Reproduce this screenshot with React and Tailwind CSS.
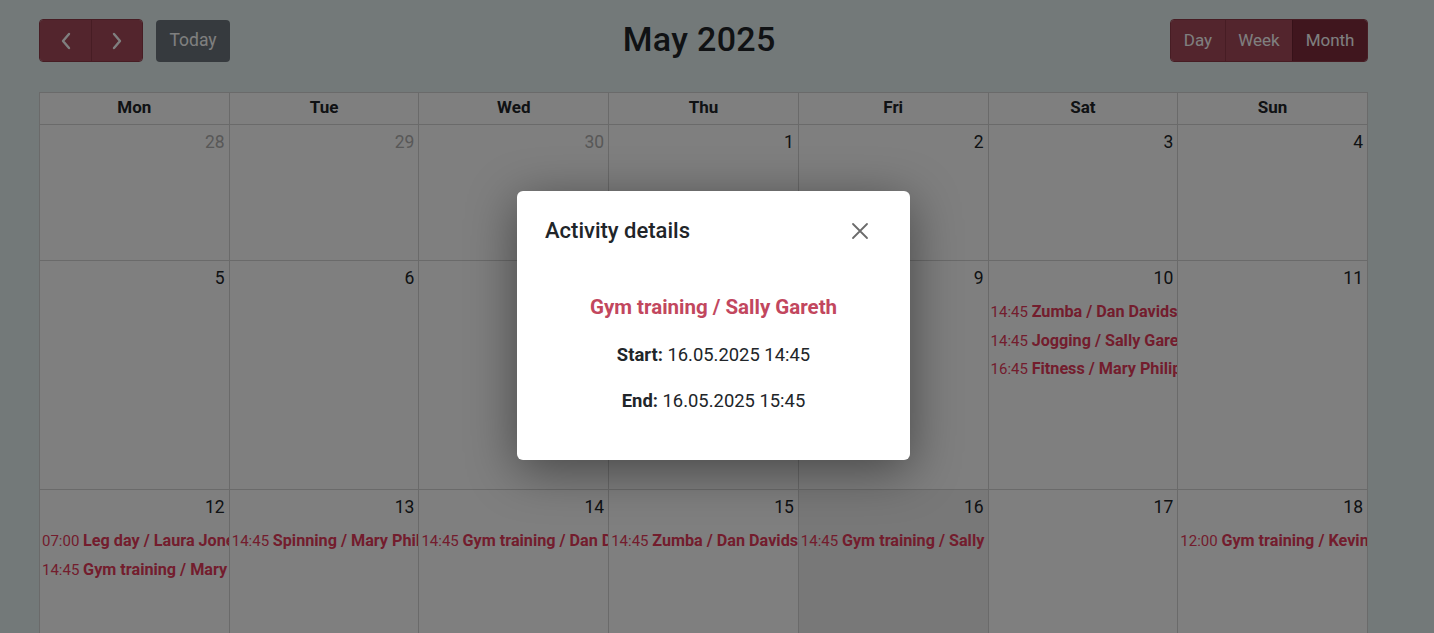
import React from "react";

const EV = "text-[#e63b5b]";

function Chevron({ dir }) {
  return (
    <svg width="12" height="18" viewBox="0 0 12 18" fill="none">
      {dir === "left" ? (
        <polyline points="9,2 3,9 9,16" stroke="white" strokeWidth="2.4" strokeLinecap="round" strokeLinejoin="round" />
      ) : (
        <polyline points="3,2 9,9 3,16" stroke="white" strokeWidth="2.4" strokeLinecap="round" strokeLinejoin="round" />
      )}
    </svg>
  );
}

const rows = [
  {
    h: "h-[136px]",
    days: [
      { n: 28, other: true },
      { n: 29, other: true },
      { n: 30, other: true },
      { n: 1 },
      { n: 2 },
      { n: 3 },
      { n: 4 },
    ],
  },
  {
    h: "h-[229px]",
    days: [
      { n: 5 },
      { n: 6 },
      { n: 7 },
      { n: 8 },
      { n: 9 },
      {
        n: 10,
        ev: [
          ["14:45", "Zumba / Dan Davidson"],
          ["14:45", "Jogging / Sally Gareth"],
          ["16:45", "Fitness / Mary Philips"],
        ],
      },
      { n: 11 },
    ],
  },
  {
    h: "h-[229px]",
    days: [
      {
        n: 12,
        ev: [
          ["07:00", "Leg day / Laura Jones"],
          ["14:45", "Gym training / Mary Philips"],
        ],
      },
      { n: 13, ev: [["14:45", "Spinning / Mary Philips"]] },
      { n: 14, ev: [["14:45", "Gym training / Dan Davidson"]] },
      { n: 15, ev: [["14:45", "Zumba / Dan Davidson"]] },
      { n: 16, hl: true, ev: [["14:45", "Gym training / Sally Gareth"]] },
      { n: 17 },
      { n: 18, ev: [["12:00", "Gym training / Kevin Smith"]] },
    ],
  },
];

export default function App() {
  return (
    <div className="relative min-h-screen h-[633px] overflow-hidden bg-[#e6f2f2] font-['Roboto','Liberation_Sans',sans-serif] text-[#212529]">
      <div className="ml-[39px] w-[1329px] pt-[19px]">
        {/* Toolbar */}
        <div className="flex h-[43px] items-center justify-between">
          <div className="flex items-center gap-[13px]">
            <div className="flex h-[43px] overflow-hidden rounded-[4px] border border-[#8e3a48]">
              <button className="flex w-[51px] items-center justify-center bg-[#a64a5a]">
                <Chevron dir="left" />
              </button>
              <button className="flex w-[51px] items-center justify-center border-l border-[#8e3a48] bg-[#a64a5a]">
                <Chevron dir="right" />
              </button>
            </div>
            <button className="h-[42px] w-[74px] rounded-[4px] bg-[#6c757d] text-[17.5px] text-white">
              Today
            </button>
          </div>
          <h2 className="mb-[4px] mr-[2px] text-[34px] font-medium leading-none tracking-[0.01em] text-[#212529]">
            May 2025
          </h2>
          <div className="flex h-[43px] overflow-hidden rounded-[4px] border border-[#8e3a48] text-[17px] text-white">
            <button className="bg-[#a64a5a] px-[12.5px]">Day</button>
            <button className="border-l border-[#8e3a48] bg-[#a64a5a] px-[12.5px]">Week</button>
            <button className="border-l border-[#6e2533] bg-[#802c3c] px-[12.5px]">Month</button>
          </div>
        </div>

        {/* Calendar */}
        <div className="mt-[30px] border-l border-t border-[#d4d4d4] bg-white">
          <div className="grid grid-cols-7">
            {["Mon", "Tue", "Wed", "Thu", "Fri", "Sat", "Sun"].map((d) => (
              <div
                key={d}
                className="flex h-[32px] items-center justify-center border-b border-r border-[#d4d4d4] pb-[2px] text-[17px] font-bold"
              >
                {d}
              </div>
            ))}
          </div>
          {rows.map((r, ri) => (
            <div key={ri} className="grid grid-cols-7">
              {r.days.map((d) => (
                <div
                  key={d.n + "-" + ri}
                  className={`${r.h} min-w-0 overflow-hidden border-b border-r border-[#d4d4d4] ${
                    d.hl ? "bg-[#f0f0f0]" : ""
                  }`}
                >
                  <div
                    className={`pr-[4px] pt-[4px] text-right text-[17.5px] leading-[26px] ${
                      d.other ? "text-[#b0b0b0]" : "text-[#212529]"
                    }`}
                  >
                    {d.n}
                  </div>
                  {d.ev && (
                    <div className="mt-[7px]">
                      {d.ev.map(([t, title], i) => (
                        <div
                          key={i}
                          className={`overflow-hidden whitespace-nowrap pl-[2px] text-[15px] leading-[28.5px] ${EV}`}
                        >
                          {t} <span className="text-[16.2px] font-bold">{title}</span>
                        </div>
                      ))}
                    </div>
                  )}
                </div>
              ))}
            </div>
          ))}
        </div>
      </div>

      {/* Modal overlay */}
      <div className="absolute inset-0 bg-black/50">
        <div className="ml-[517px] mt-[191px] w-[393px] rounded-[6px] bg-white px-[28px] pb-[47px] pt-[28px] shadow-[0_10px_50px_rgba(0,0,0,0.45)]">
          <div className="flex h-[24px] items-center justify-between">
            <h5 className="text-[22px] font-medium leading-[24px] text-[#212529]">Activity details</h5>
            <button className="mr-[12px] flex h-[20px] w-[20px] items-center justify-center">
              <svg width="18" height="18" viewBox="0 0 18 18">
                <path d="M2 2 L16 16 M16 2 L2 16" stroke="#6b6b6b" strokeWidth="1.8" strokeLinecap="round" />
              </svg>
            </button>
          </div>
          <div className="text-center">
            <div className="mt-[50px] text-[20.5px] font-bold leading-[28px] text-[#c2475e]">
              Gym training / Sally Gareth
            </div>
            <div className="mt-[22px] text-[18.4px] leading-[24px] text-[#212529]">
              <span className="font-bold">Start:</span> 16.05.2025 14:45
            </div>
            <div className="mt-[22px] text-[18.4px] leading-[24px] text-[#212529]">
              <span className="font-bold">End:</span> 16.05.2025 15:45
            </div>
          </div>
        </div>
      </div>
    </div>
  );
}
